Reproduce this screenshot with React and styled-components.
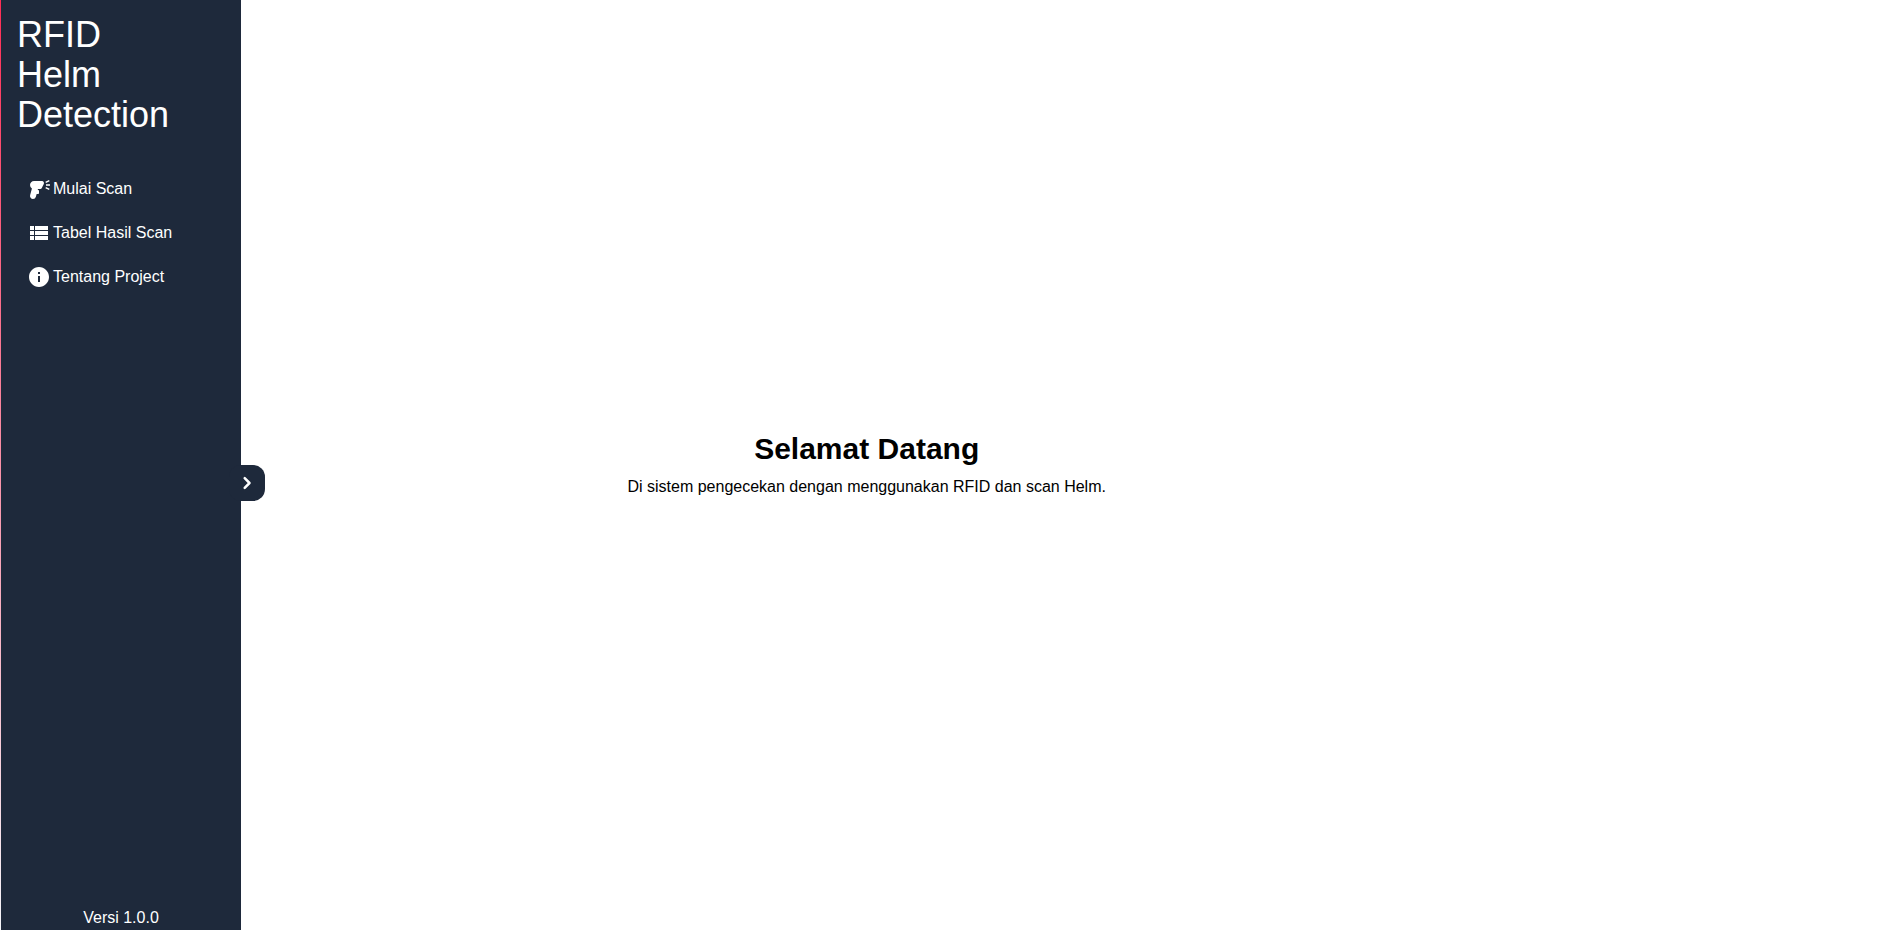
import React from "react";
import styled, { createGlobalStyle } from "styled-components";
import { MdBarcodeReader, MdViewList, MdInfo } from "react-icons/md";

const GlobalStyle = createGlobalStyle`
  *, *::before, *::after { box-sizing: border-box; }
  body {
    margin: 0;
    background: #fff;
    color: #000;
    font-family: "Liberation Sans", Arial, sans-serif;
    font-size: 16px;
    line-height: 24px;
  }
`;

const Page = styled.div`
  display: flex;
  min-height: 100vh;
  padding-left: 1px;
  background: linear-gradient(#ff2d55, #f5f5fa) left / 1px 100% no-repeat;
`;

const Sidebar = styled.aside`
  position: relative;
  display: flex;
  flex-direction: column;
  flex: 0 0 240px;
  background: #1e293b;
  color: #fff;
`;

const Title = styled.h1`
  margin: 0;
  padding: 15px 64px 32px 16px;
  font-size: 36px;
  font-weight: 400;
  line-height: 40px;
`;

const Menu = styled.nav`
  display: flex;
  flex-direction: column;
  padding: 0 16px;
`;

const MenuLink = styled.a`
  display: flex;
  align-items: center;
  gap: 2px;
  padding: 10px;
  color: inherit;
  text-decoration: none;
`;

const Version = styled.footer`
  margin-top: auto;
  text-align: center;
`;

const Toggle = styled.button`
  position: absolute;
  top: 50%;
  right: -24px;
  display: flex;
  padding: 6px;
  border: 0;
  border-radius: 12px;
  background: #1e293b;
  color: #fff;
  cursor: pointer;
`;

const Main = styled.main`
  display: flex;
  flex-direction: column;
  align-items: center;
  justify-content: center;
  gap: 8px;
  flex: 0 1 66.6%;
  text-align: center;
`;

const Heading = styled.h2`
  margin: 0;
  font-size: 30px;
  font-weight: 700;
  line-height: 36px;
`;

const Lead = styled.p`
  margin: 0;
`;

const items = [
  { label: "Mulai Scan", Icon: MdBarcodeReader },
  { label: "Tabel Hasil Scan", Icon: MdViewList },
  { label: "Tentang Project", Icon: MdInfo },
];

function Chevron() {
  return (
    <svg width="24" height="24" viewBox="0 0 24 24" fill="none" aria-hidden="true">
      <path
        d="M9.7 7.2 14.5 12l-4.8 4.8"
        stroke="currentColor"
        strokeWidth="2.5"
        strokeLinecap="round"
        strokeLinejoin="round"
      />
    </svg>
  );
}

export default function App() {
  return (
    <>
      <GlobalStyle />
      <Page>
        <Sidebar>
          <Title>RFID Helm Detection</Title>
          <Menu>
            {items.map(({ label, Icon }) => (
              <MenuLink key={label} href="#">
                <Icon size={24} aria-hidden="true" />
                {label}
              </MenuLink>
            ))}
          </Menu>
          <Version>Versi 1.0.0</Version>
          <Toggle type="button" aria-label="Sidebar">
            <Chevron />
          </Toggle>
        </Sidebar>
        <Main>
          <Heading>Selamat Datang</Heading>
          <Lead>Di sistem pengecekan dengan menggunakan RFID dan scan Helm.</Lead>
        </Main>
      </Page>
    </>
  );
}
